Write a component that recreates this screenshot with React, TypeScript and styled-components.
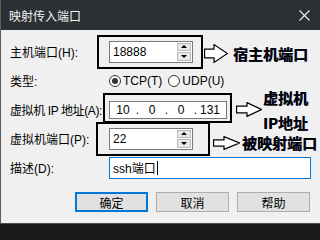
import styled, { createGlobalStyle } from "styled-components";

const GlobalStyle = createGlobalStyle`
  html, body {
    margin: 0;
    padding: 0;
    background: #1b1b1b;
  }
  body {
    font-family: "Liberation Sans", "Noto Sans CJK SC", sans-serif;
    font-size: 12px;
    color: #000;
  }
`;

const Window = styled.div`
  width: 320px;
  height: 224px;
  box-sizing: border-box;
  display: flex;
  flex-direction: column;
  background: #f0f0f0;
  border-left: 1px solid #5b5b5b;
  border-bottom: 1px solid #4d4d4d;
  overflow: hidden;
`;

const TitleBar = styled.div`
  height: 30px;
  flex-shrink: 0;
  display: flex;
  align-items: center;
  justify-content: space-between;
  padding: 0 10px 0 8px;
  background: #2b3035;
  color: #f2f2f2;
  font-size: 12px;
`;

const Form = styled.div`
  display: flex;
  flex-direction: column;
  padding: 7px 10px 0 9px;
`;

const Row = styled.div`
  height: 29px;
  display: flex;
  align-items: center;
`;

const Label = styled.div<{ $tight?: boolean }>`
  width: 99px;
  flex-shrink: 0;
  white-space: nowrap;
  letter-spacing: ${(p) => (p.$tight ? "-0.4px" : "0")};
`;

const Field = styled.div`
  position: relative;
  flex-shrink: 0;
  display: flex;
`;

/* black annotation frame drawn over the screenshot */
const Frame = styled.div<{ $t: number; $r: number; $b: number; $l: number }>`
  position: absolute;
  top: -${(p) => p.$t}px;
  right: -${(p) => p.$r}px;
  bottom: -${(p) => p.$b}px;
  left: -${(p) => p.$l}px;
  border: 2px solid #000;
  pointer-events: none;
`;

const TextBox = styled.div<{ $w: number; $h: number; $focus?: boolean }>`
  width: ${(p) => p.$w}px;
  height: ${(p) => p.$h}px;
  box-sizing: border-box;
  display: flex;
  align-items: stretch;
  background: #fff;
  border: 1px solid ${(p) => (p.$focus ? "#0078d7" : "#7a7a7a")};
`;

const Value = styled.div`
  flex: 1;
  display: flex;
  align-items: center;
  padding-left: 3px;
  white-space: nowrap;
`;

const Caret = styled.span`
  display: inline-block;
  width: 1px;
  height: 14px;
  margin-left: 1px;
  background: #000;
`;

const Spinner = styled.div`
  width: 16px;
  display: flex;
  flex-direction: column;
  gap: 1px;
  padding: 1px;
  box-sizing: border-box;
`;

const SpinButton = styled.div`
  flex: 1;
  display: flex;
  align-items: center;
  justify-content: center;
  background: #e9e9e9;
  border: 1px solid #b9b9b9;
`;

const Tri = styled.div<{ $up?: boolean }>`
  width: 0;
  height: 0;
  border-left: 3px solid transparent;
  border-right: 3px solid transparent;
  ${(p) =>
    p.$up ? "border-bottom: 3px solid #000;" : "border-top: 3px solid #000;"}
`;

const Octet = styled.div`
  width: 26px;
  display: flex;
  align-items: center;
  justify-content: center;
`;

const Dot = styled.div`
  width: 3px;
  display: flex;
  align-items: center;
  justify-content: center;
`;

const RadioGroup = styled.div`
  display: flex;
  align-items: center;
  gap: 6px;
`;

const RadioOption = styled.div`
  display: flex;
  align-items: center;
  gap: 2px;
`;

const Circle = styled.div<{ $on?: boolean }>`
  width: 12px;
  height: 12px;
  box-sizing: border-box;
  border-radius: 50%;
  border: 1px solid #333;
  background: #fff;
  display: flex;
  align-items: center;
  justify-content: center;

  &::after {
    content: "";
    width: 6px;
    height: 6px;
    border-radius: 50%;
    background: ${(p) => (p.$on ? "#333" : "transparent")};
  }
`;

const Callout = styled.div<{ $gap: number; $drop: number; $space: number }>`
  display: flex;
  align-items: center;
  gap: ${(p) => p.$space}px;
  margin-left: ${(p) => p.$gap}px;
  padding-top: ${(p) => p.$drop}px;
  flex-shrink: 0;
  white-space: nowrap;
`;

const CalloutText = styled.div`
  font-family: "Noto Sans CJK SC", sans-serif;
  font-size: 15px;
  font-weight: 700;
  line-height: 25px;
  color: #000;
  text-shadow: 0.4px 0 0 #1a2a6a;
`;

const ButtonBar = styled.div`
  display: flex;
  justify-content: flex-end;
  gap: 8px;
  margin-top: 10px;
`;

const Button = styled.div<{ $default?: boolean }>`
  width: 73px;
  height: 20px;
  box-sizing: border-box;
  display: flex;
  align-items: center;
  justify-content: center;
  background: #e1e1e1;
  border: ${(p) => (p.$default ? "2px solid #0078d7" : "1px solid #adadad")};
`;

const Arrow = ({ w, h }: { w: number; h: number }) => {
  const neck = Math.round(w * 0.42);
  const top = h * 0.27;
  const bot = h * 0.73;
  const pts = [
    [0.6, top],
    [neck, top],
    [neck, 0.6],
    [w - 0.6, h / 2],
    [neck, h - 0.6],
    [neck, bot],
    [0.6, bot],
  ]
    .map((p) => p.join(","))
    .join(" ");
  return (
    <svg width={w} height={h} viewBox={`0 0 ${w} ${h}`}>
      <polygon points={pts} fill="#fff" stroke="#000" strokeWidth="1.2" />
    </svg>
  );
};

const Spin = () => (
  <Spinner>
    <SpinButton>
      <Tri $up />
    </SpinButton>
    <SpinButton>
      <Tri />
    </SpinButton>
  </Spinner>
);

export default function App() {
  return (
    <>
      <GlobalStyle />
      <Window>
        <TitleBar>
          <span>映射传入端口</span>
          <svg width="11" height="11" viewBox="0 0 11 11">
            <path d="M0.5 0.5 L10.5 10.5 M10.5 0.5 L0.5 10.5" stroke="#f2f2f2" strokeWidth="1.1" />
          </svg>
        </TitleBar>
        <Form>
          <Row>
            <Label>主机端口(H):</Label>
            <Field>
              <TextBox $w={84} $h={22}>
                <Value>18888</Value>
                <Spin />
              </TextBox>
              <Frame $t={6} $r={10} $b={6} $l={12} />
            </Field>
            <Callout $gap={11} $drop={3} $space={5}>
              <Arrow w={24} h={19} />
              <CalloutText>宿主机端口</CalloutText>
            </Callout>
          </Row>
          <Row>
            <Label>类型:</Label>
            <RadioGroup>
              <RadioOption>
                <Circle $on />
                TCP(T)
              </RadioOption>
              <RadioOption>
                <Circle />
                UDP(U)
              </RadioOption>
            </RadioGroup>
          </Row>
          <Row>
            <Label $tight>虚拟机 IP 地址(A):</Label>
            <Field>
              <TextBox $w={118} $h={18}>
                <Octet>10</Octet>
                <Dot>.</Dot>
                <Octet>0</Octet>
                <Dot>.</Dot>
                <Octet>0</Octet>
                <Dot>.</Dot>
                <Octet>131</Octet>
              </TextBox>
              <Frame $t={8} $r={5} $b={4} $l={6} />
            </Field>
            <Callout $gap={9} $drop={0} $space={1}>
              <Arrow w={26} h={15} />
              <CalloutText>
                虚拟机
                <br />
                IP地址
              </CalloutText>
            </Callout>
          </Row>
          <Row>
            <Label>虚拟机端口(P):</Label>
            <Field>
              <TextBox $w={84} $h={22}>
                <Value>22</Value>
                <Spin />
              </TextBox>
              <Frame $t={6} $r={17} $b={6} $l={13} />
            </Field>
            <Callout $gap={20} $drop={8} $space={2}>
              <Arrow w={27} h={14} />
              <CalloutText>被映射端口</CalloutText>
            </Callout>
          </Row>
          <Row>
            <Label>描述(D):</Label>
            <Field>
              <TextBox $w={202} $h={22} $focus>
                <Value>
                  ssh端口
                  <Caret />
                </Value>
              </TextBox>
            </Field>
          </Row>
          <ButtonBar>
            <Button $default>确定</Button>
            <Button>取消</Button>
            <Button>帮助</Button>
          </ButtonBar>
        </Form>
      </Window>
    </>
  );
}
